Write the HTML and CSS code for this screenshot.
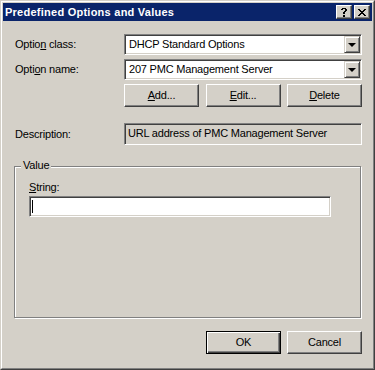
FILE: index.html
```html
<!DOCTYPE html>
<html>
<head>
<meta charset="utf-8">
<link rel="stylesheet" href="styles.css">
</head>
<body>
<div class="window">
  <div class="frame">
    <div class="titlebar">
      <span class="title">Predefined Options and Values</span>
      <div class="caption-btns">
        <span class="cap-btn">
          <svg width="6" height="9" viewBox="0 0 6 9" shape-rendering="crispEdges">
            <path d="M1 0h4v1h-4zM0 1h2v1h-2zM4 1h2v2h-2zM3 3h2v1h-2zM2 4h2v2h-2zM2 7h2v2h-2z" fill="#000"/>
          </svg>
        </span>
        <span class="cap-btn">
          <svg width="8" height="7" viewBox="0 0 8 7" shape-rendering="crispEdges">
            <path d="M0 0h2v1h-2zM6 0h2v1h-2zM1 1h2v1h-2zM5 1h2v1h-2zM2 2h4v1h-4zM3 3h2v1h-2zM2 4h4v1h-4zM1 5h2v1h-2zM5 5h2v1h-2zM0 6h2v1h-2zM6 6h2v1h-2z" fill="#000"/>
          </svg>
        </span>
      </div>
    </div>
    <div class="content">
      <div class="row">
        <label class="lbl">Optio<u>n</u> class:</label>
        <div class="combo">
          <span class="combo-text">DHCP Standard Options</span>
          <span class="combo-btn"><span class="arrow"></span></span>
        </div>
      </div>
      <div class="row gap4">
        <label class="lbl">Opti<u>o</u>n name:</label>
        <div class="combo">
          <span class="combo-text">207 PMC Management Server</span>
          <span class="combo-btn"><span class="arrow"></span></span>
        </div>
      </div>
      <div class="btn-row">
        <button class="btn"><u>A</u>dd...</button>
        <button class="btn"><u>E</u>dit...</button>
        <button class="btn"><u>D</u>elete</button>
      </div>
      <div class="row desc-row">
        <label class="lbl">Description:</label>
        <div class="readonly">URL address of PMC Management Server</div>
      </div>
      <div class="group">
        <span class="legend">Value</span>
        <label class="lbl str-lbl"><u>S</u>tring:</label>
        <div class="edit"><span class="caret"></span></div>
      </div>
      <div class="footer">
        <button class="btn default">OK</button>
        <button class="btn">Cancel</button>
      </div>
    </div>
  </div>
</div>
</body>
</html>
```
FILE: styles.css
```css
* { box-sizing: border-box; }
html, body { margin: 0; padding: 0; background: #D4D0C8; }
body {
  font-family: "Liberation Sans", Arial, sans-serif;
  font-size: 11px;
  letter-spacing: -0.2px;
  color: #000;
}
.window {
  width: 375px;
  height: 370px;
  border: 1px solid;
  border-color: #D4D0C8 #404040 #404040 #D4D0C8;
  background: #D4D0C8;
}
.frame {
  height: 100%;
  border: 1px solid;
  border-color: #FFFFFF #808080 #808080 #FFFFFF;
  padding: 1px;
  display: flex;
  flex-direction: column;
}
.titlebar {
  height: 18px;
  background: #0A246A;
  display: flex;
  align-items: center;
  justify-content: space-between;
  padding: 0 2px 0 2px;
}
.title {
  color: #fff;
  font-weight: bold;
  font-size: 11px;
  letter-spacing: 0.25px;
  line-height: 18px;
}
.caption-btns {
  display: flex;
  gap: 2px;
}
.cap-btn {
  width: 16px;
  height: 14px;
  background: #D4D0C8;
  border: 1px solid;
  border-color: #fff #404040 #404040 #fff;
  box-shadow: inset -1px -1px 0 #808080;
  display: flex;
  align-items: center;
  justify-content: center;
  padding-right: 1px;
}
.content {
  flex: 1;
  padding: 13px 10px 0 12px;
  display: flex;
  flex-direction: column;
}
.row {
  display: flex;
  align-items: center;
}
.gap4 { margin-top: 4px; }
.lbl {
  width: 109px;
  flex: none;
  line-height: 13px;
}
.combo {
  width: 238px;
  height: 21px;
  background: #fff;
  border: 1px solid;
  border-color: #808080 #fff #fff #808080;
  box-shadow: inset 1px 1px 0 #404040, inset -1px -1px 0 #D4D0C8;
  display: flex;
  align-items: center;
  padding: 1px 1px 1px 4px;
}
.combo-text {
  flex: 1;
  line-height: 17px;
  white-space: nowrap;
}
.combo-btn {
  width: 16px;
  height: 17px;
  background: #D4D0C8;
  border: 1px solid;
  border-color: #D4D0C8 #404040 #404040 #D4D0C8;
  box-shadow: inset 1px 1px 0 #fff, inset -1px -1px 0 #808080;
  display: flex;
  align-items: center;
  justify-content: center;
}
.arrow {
  width: 0;
  height: 0;
  border-left: 4px solid transparent;
  border-right: 4px solid transparent;
  border-top: 4px solid #000;
  margin-top: 1px;
}
.btn-row {
  margin: 4px 0 0 109px;
  width: 238px;
  display: flex;
  justify-content: space-between;
}
.btn {
  width: 75px;
  height: 23px;
  font: inherit;
  letter-spacing: inherit;
  color: #000;
  background: #D4D0C8;
  border: 1px solid;
  border-color: #fff #404040 #404040 #fff;
  box-shadow: inset -1px -1px 0 #808080;
  padding: 0;
  text-align: center;
  line-height: 19px;
}
.btn.default {
  border: 1px solid #000;
  box-shadow: inset 1px 1px 0 #fff, inset -1px -1px 0 #404040, inset -2px -2px 0 #808080;
}
.desc-row {
  margin-top: 16px;
}
.readonly {
  width: 238px;
  height: 22px;
  background: #D4D0C8;
  border: 1px solid;
  border-color: #808080 #fff #fff #808080;
  box-shadow: inset 1px 1px 0 #404040, inset -1px -1px 0 #D4D0C8;
  padding: 2px 3px;
  line-height: 14px;
  white-space: nowrap;
}
.group {
  position: relative;
  margin: 21px 0 0 -1px;
  width: 347px;
  height: 152px;
  border: 1px solid #808080;
  box-shadow: inset 1px 1px 0 #fff, 1px 1px 0 #fff;
  padding: 14px 0 0 14px;
  display: flex;
  flex-direction: column;
}
.legend {
  position: absolute;
  left: 6px;
  top: -8px;
  padding: 0 2px;
  background: #D4D0C8;
  line-height: 13px;
}
.str-lbl {
  width: auto;
}
.edit {
  margin-top: 2px;
  width: 302px;
  height: 21px;
  background: #fff;
  border: 1px solid;
  border-color: #808080 #fff #fff #808080;
  box-shadow: inset 1px 1px 0 #404040, inset -1px -1px 0 #D4D0C8;
  padding: 3px 0 0 2px;
}
.caret {
  display: block;
  width: 1px;
  height: 13px;
  background: #000;
}
.footer {
  margin-top: 13px;
  display: flex;
  justify-content: flex-end;
  gap: 6px;
}
u { text-underline-offset: 1px; }
```
